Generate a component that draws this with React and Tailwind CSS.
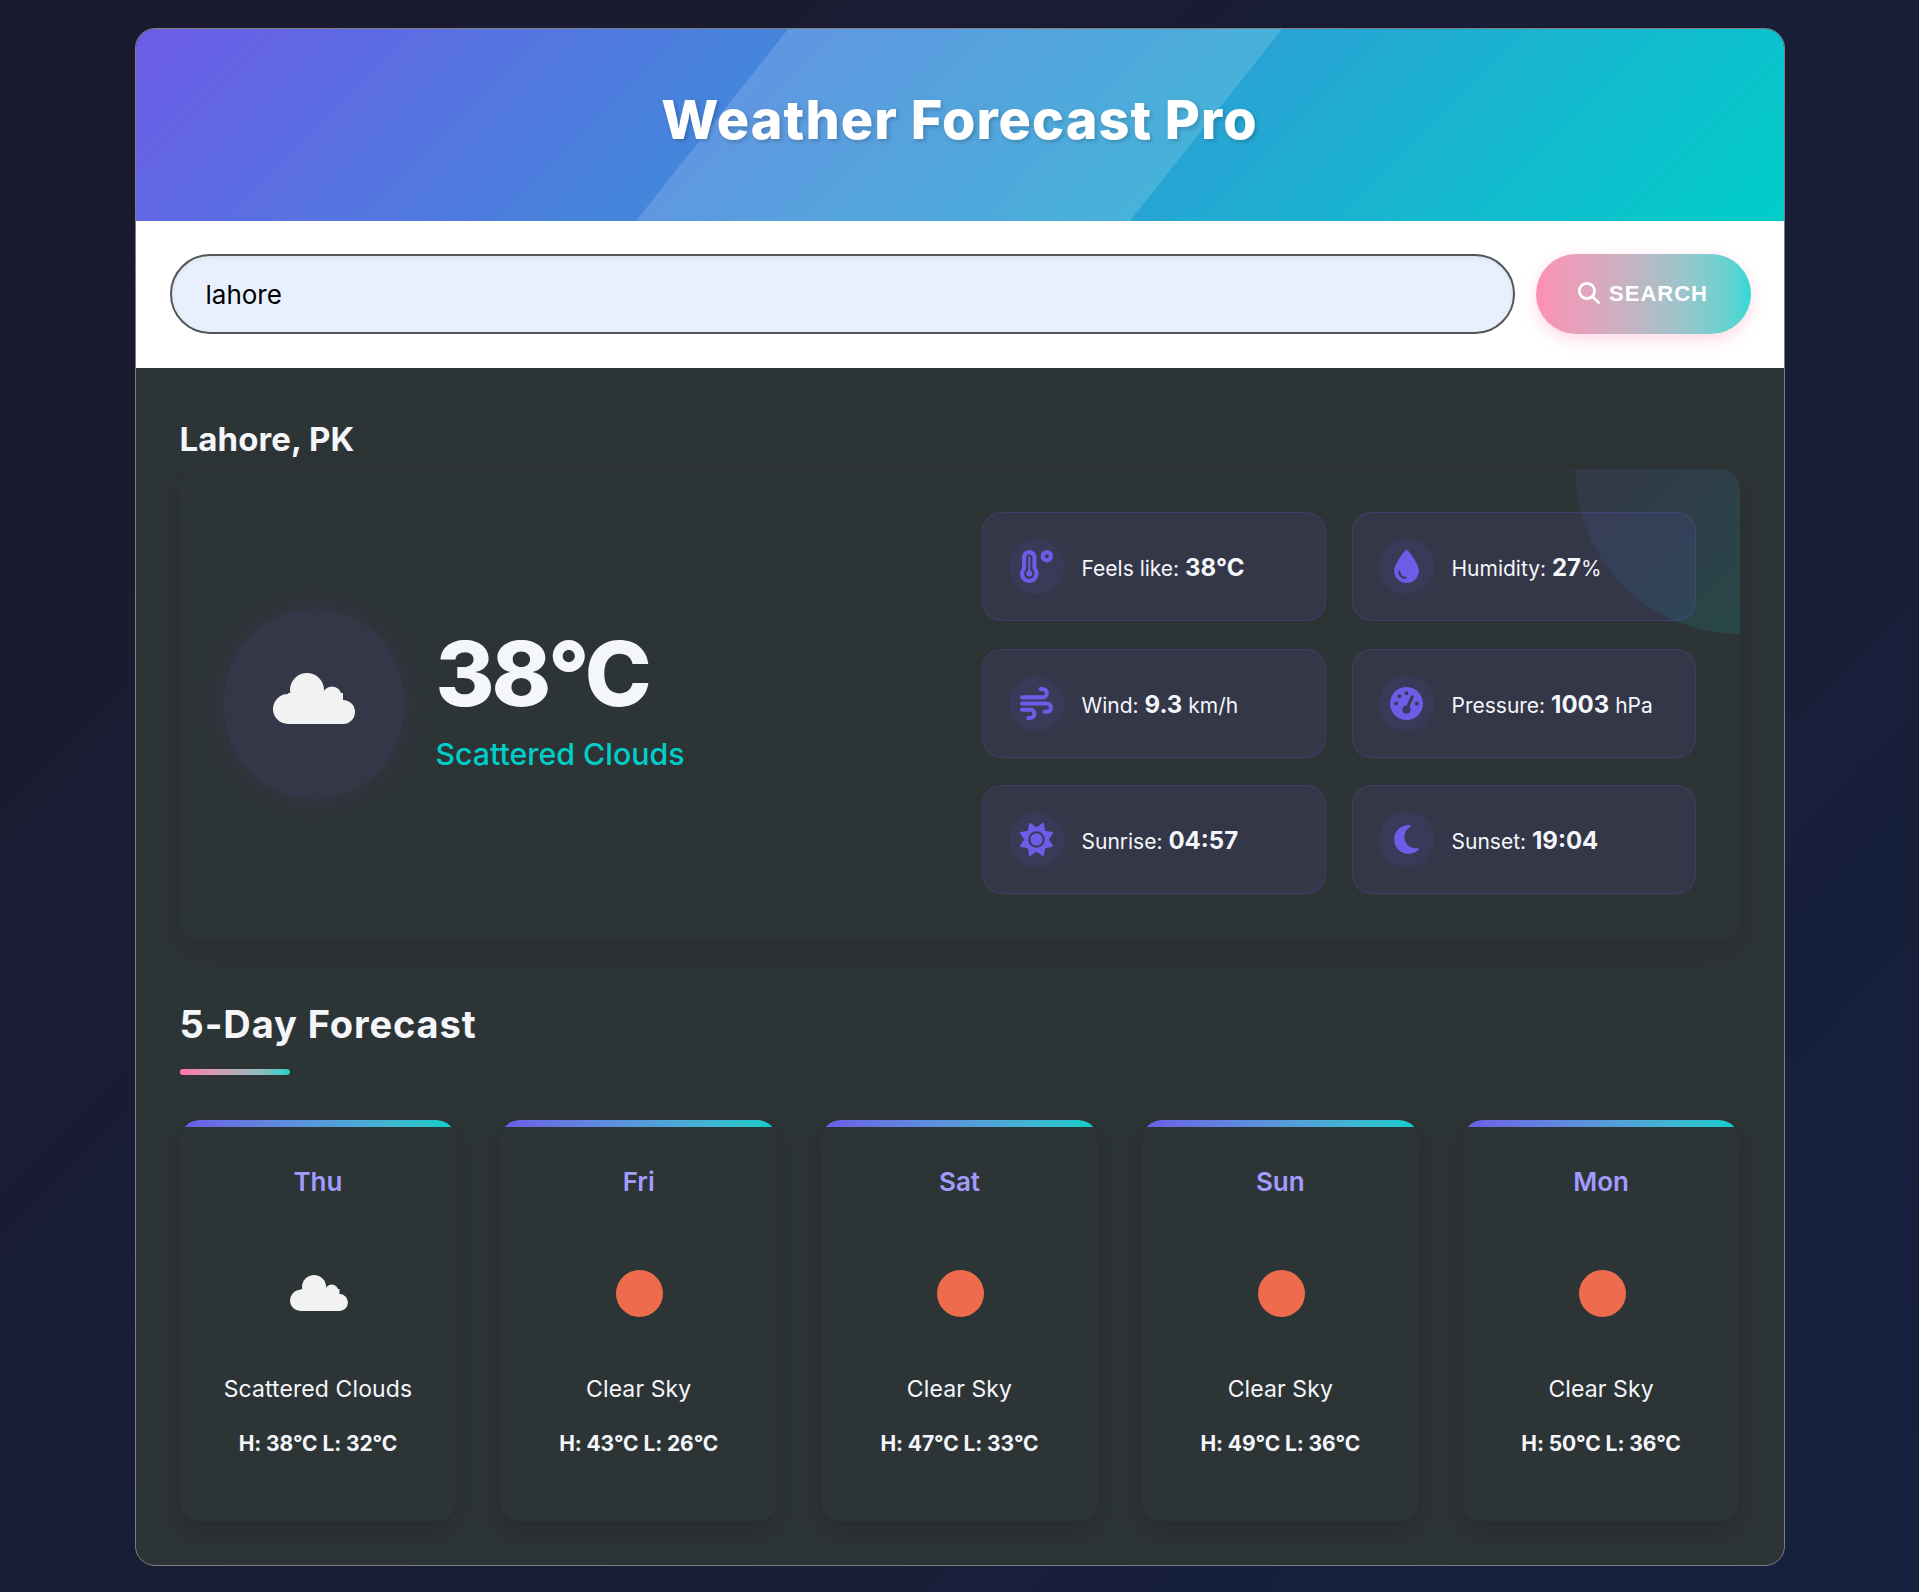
import { FaDroplet, FaGaugeHigh, FaMagnifyingGlass, FaMoon, FaSun, FaTemperatureHigh, FaWind } from "react-icons/fa6";

const STATS = [
  { icon: FaTemperatureHigh, label: "Feels like:", value: "38°C" },
  { icon: FaDroplet, label: "Humidity:", value: "27", unit: "%" },
  { icon: FaWind, label: "Wind:", value: "9.3", unit: " km/h" },
  { icon: FaGaugeHigh, label: "Pressure:", value: "1003", unit: " hPa" },
  { icon: FaSun, label: "Sunrise:", value: "04:57" },
  { icon: FaMoon, label: "Sunset:", value: "19:04" },
];

const FORECAST = [
  { day: "Thu", desc: "Scattered Clouds", temps: "H: 38°C L: 32°C", cloudy: true },
  { day: "Fri", desc: "Clear Sky", temps: "H: 43°C L: 26°C" },
  { day: "Sat", desc: "Clear Sky", temps: "H: 47°C L: 33°C" },
  { day: "Sun", desc: "Clear Sky", temps: "H: 49°C L: 36°C" },
  { day: "Mon", desc: "Clear Sky", temps: "H: 50°C L: 36°C" },
];

function Cloud({ className }) {
  return (
    <svg viewBox="0 0 82 51" className={className} fill="#f2f2f2">
      <circle cx="15" cy="36" r="15" />
      <circle cx="34" cy="17" r="17" />
      <circle cx="59" cy="23" r="9.5" />
      <circle cx="70" cy="39" r="12" />
      <rect x="15" y="20" width="55" height="31" />
    </svg>
  );
}

function StatCard({ icon: Icon, label, value, unit }) {
  return (
    <div className="flex h-[109px] items-center gap-[18px] rounded-[20px] border border-[#6c5ce7]/20 bg-[#6c5ce7]/10 px-[26px]">
      <div className="flex size-[55px] shrink-0 items-center justify-center rounded-full bg-[#6c5ce7]/10">
        <Icon className="size-[33px] text-[#6c5ce7]" />
      </div>
      <p className="pt-[3px] text-[21px] text-[#f5f6fa]">
        {label} <strong className="text-[24px] font-bold">{value}</strong>
        {unit}
      </p>
    </div>
  );
}

function ForecastCard({ day, desc, temps, cloudy }) {
  return (
    <div className="flex h-[401px] flex-col items-center overflow-hidden rounded-[20px] bg-[#2d3436] shadow-[0_10px_25px_rgba(0,0,0,0.15)]">
      <div className="h-[7px] w-full shrink-0 bg-gradient-to-r from-[#6c5ce7] to-[#00cec9]" />
      <h3 className="mt-[38px] text-[26px] leading-[34px] font-semibold text-[#a29bfe]">{day}</h3>
      <div className="mt-[70px] ml-[2px] flex h-[48px] items-center justify-center">
        {cloudy ? <Cloud className="h-[36px] w-[58px]" /> : <div className="size-[47px] rounded-full bg-[#ee6c4d]" />}
      </div>
      <p className="mt-[56px] text-[23px] leading-[32px] tracking-[0.1px] text-[#f5f6fa]">{desc}</p>
      <p className="mt-[23px] text-[21px] leading-[32px] font-bold tracking-[-0.1px] text-[#f5f6fa]">{temps}</p>
    </div>
  );
}

export default function App() {
  return (
    <div className="min-h-[1592px] bg-[linear-gradient(135deg,#1a1a2e,#16213e)] py-[28px] font-['Inter',sans-serif]">
      <div className="mx-auto w-[1650px] overflow-hidden rounded-[20px] border border-[#7d7f85] bg-[#2d3436]">
        {/* Header */}
        <header className="relative flex h-[192px] items-center justify-center overflow-hidden bg-[linear-gradient(135deg,#6c5ce7,#00cec9)] pb-[12px]">
          <div className="absolute top-0 left-[35%] h-full w-[30%] -skew-x-[38.4deg] bg-white/15" />
          <h1 className="relative text-[54px] font-extrabold tracking-[1px] text-white [text-shadow:2px_2px_4px_rgba(0,0,0,0.2)]">
            Weather Forecast Pro
          </h1>
        </header>

        {/* Search */}
        <div className="flex items-center gap-[21px] bg-white pt-[33px] pr-[33px] pb-[34px] pl-[34px]">
          <input
            readOnly
            value="lahore"
            className="h-[80px] flex-1 rounded-full border-2 border-[#555] bg-[#e8f0fe] px-[34px] text-[26px] text-black shadow-[inset_0_2px_5px_rgba(0,0,0,0.05)] outline-none"
          />
          <button className="flex h-[80px] w-[215px] items-center justify-center gap-[9px] rounded-full bg-gradient-to-r from-[#fd8fb5] to-[#2fd8d4] pb-[2px] font-['Liberation_Sans',sans-serif] text-[22px] font-bold tracking-[1px] text-white shadow-[0_5px_15px_rgba(253,121,168,0.3)]">
            <FaMagnifyingGlass className="size-[22px]" />
            SEARCH
          </button>
        </div>

        {/* Current weather */}
        <main className="px-[44px] pt-[50px] pb-[44px]">
          <h2 className="text-[33px] leading-[42px] font-bold tracking-[0.1px] text-[#f5f6fa]">Lahore, PK</h2>
          <section className="relative mt-[9px] flex h-[470px] items-center overflow-hidden rounded-[20px] bg-[#2d3436] px-[44px] shadow-[0_10px_30px_rgba(0,0,0,0.12)]">
            <div className="absolute top-0 right-0 size-[165px] rounded-bl-full bg-[linear-gradient(135deg,rgba(108,92,231,0.1),rgba(0,206,201,0.12))]" />
            <div className="relative flex flex-1 items-center gap-[32px]">
              <div className="flex h-[190px] w-[180px] items-center justify-center rounded-full bg-[#6c5ce7]/10 pb-[12px] shadow-[0_0_30px_rgba(108,92,231,0.1)]">
                <Cloud className="h-[51px] w-[82px]" />
              </div>
              <div className="-mt-[10px]">
                <div className="text-[90px] leading-[100px] font-extrabold tracking-[-3px] text-[#f5f6fa]">38°C</div>
                <div className="mt-[10px] text-[30.3px] leading-[40px] font-medium text-[#00cec9]">Scattered Clouds</div>
              </div>
            </div>
            <div className="relative -mt-[2px] grid w-[714px] grid-cols-2 gap-x-[26px] gap-y-[27.5px]">
              {STATS.map((s) => (
                <StatCard key={s.label} {...s} />
              ))}
            </div>
          </section>

          {/* Forecast */}
          <h2 className="mt-[61px] text-[38px] leading-[48px] font-bold tracking-[0.9px] text-[#f5f6fa]">5-Day Forecast</h2>
          <div className="mt-[21px] h-[6px] w-[110px] rounded-[3px] bg-gradient-to-r from-[#fd79a8] to-[#00cec9]" />
          <div className="mt-[45px] grid grid-cols-5 gap-[44px]">
            {FORECAST.map((f) => (
              <ForecastCard key={f.day} {...f} />
            ))}
          </div>
        </main>
      </div>
    </div>
  );
}
